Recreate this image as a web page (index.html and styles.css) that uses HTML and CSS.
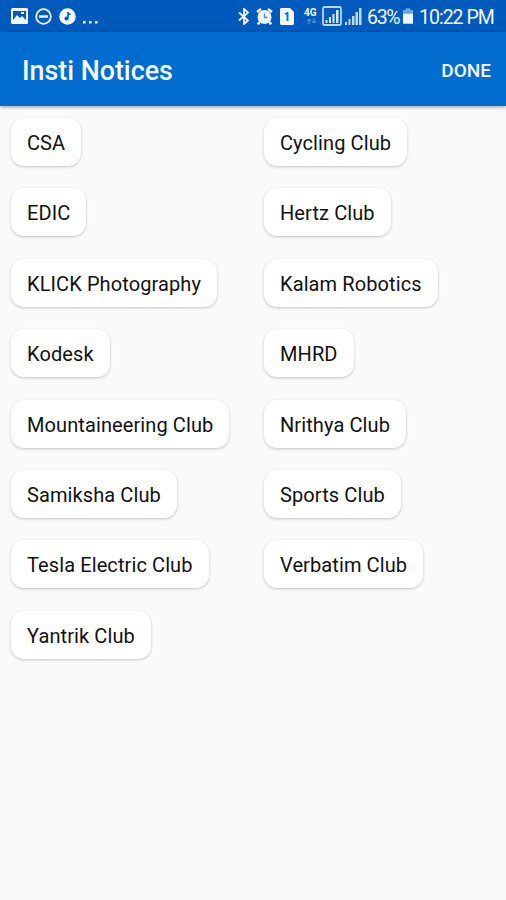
FILE: index.html
```html
<!DOCTYPE html>
<html lang="en">
<head>
<meta charset="utf-8">
<title>Insti Notices</title>
<link rel="stylesheet" href="styles.css">
</head>
<body>
<div class="status">
  <div class="status-left">
    <svg width="17" height="16" viewBox="0 0 17 16"><path fill="currentColor" fill-rule="evenodd" d="M1.500 0h14a1.500 1.500 0 0 1 1.500 1.500v13a1.500 1.500 0 0 1-1.500 1.500h-14A1.500 1.500 0 0 1 0 14.500v-13A1.500 1.500 0 0 1 1.500 0zM2 3v9l4-5 3 3 2-2 4 4V3zM10 4h3v2h-3z"/></svg>
    <svg width="17" height="17" viewBox="0 0 17 17"><circle cx="8.500" cy="8.500" r="7.300" fill="none" stroke="currentColor" stroke-width="1.800"/><path d="M4 8.500h9" stroke="currentColor" stroke-width="2.500"/></svg>
    <svg width="17" height="17" viewBox="0 0 17 17"><circle cx="8.500" cy="8.500" r="8.300" fill="currentColor"/><path d="M9 4v6M9 5.500l2.500 1" stroke="#005abc" stroke-width="1.500"/><circle cx="7.500" cy="10.500" r="2" fill="#005abc"/></svg>
    <svg class="more" width="15" height="3" viewBox="0 0 15 3"><path fill="currentColor" d="M0 0h2.500v2.500H0zM6 0h2.500v2.500H6zM12 0h2.500v2.500H12z"/></svg>
  </div>
  <div class="status-right">
    <svg class="bt" width="12" height="17" viewBox="0 0 12 17"><path d="M1 4.500l9 8-4 3.500V1l4 3.500-9 8" fill="none" stroke="currentColor" stroke-width="1.800"/></svg>
    <svg class="alarm" width="17" height="17" viewBox="0 0 17 17"><circle cx="8.500" cy="9" r="7" fill="currentColor"/><path d="M1 4l4-3M16 4l-4-3M3.500 14L2 16.500M13.500 14l1.500 2.500" stroke="currentColor" stroke-width="2.500"/><path d="M8.500 5.500V9.500H11.500" fill="none" stroke="#4d88cd" stroke-width="1.300"/></svg>
    <svg class="sim" width="14" height="17" viewBox="0 0 14 17"><path fill="currentColor" d="M1 0h9l4 4v12l-1 1H1l-1-1V1z"/><path d="M5 6l2.500-1v8" fill="none" stroke="#1765bf" stroke-width="1.800"/></svg>
    <div class="network"><span>4G</span><svg width="11" height="6" viewBox="0 0 11 6"><path d="M3 6V1M1 3l2-2 2 2M8 0v5M6 3l2 2 2-2" fill="none" stroke="#5c9be0" stroke-width="1"/></svg></div>
    <svg class="boxed" width="20" height="20" viewBox="0 0 20 20"><rect x="1" y="1" width="18" height="18" rx="1.500" fill="none" stroke="#b7d4f5" stroke-width="1.800"/><path fill="#d7e7fb" d="M3.500 14h2v3h-2zM7 11h2v6H7zM10.500 8h2v9h-2zM14 4h2.500v13H14z"/></svg>
    <svg class="signal" width="17" height="17" viewBox="0 0 17 17"><path fill="#c2d9f5" d="M0 14h2v3H0zM3.500 11h2v6h-2zM7 8h2.500v9H7zM10.500 4H13v13h-2.500zM14 0h2.500v17H14z"/></svg>
    <span class="percent">63%</span>
    <svg class="battery" width="10" height="16" viewBox="0 0 11 17"><path fill="#6ba6e2" d="M3 0h5v2h3v5H0V2h3z"/><path fill="currentColor" d="M0 6h11v11H0z"/></svg>
    <span class="clock">10:22 PM</span>
  </div>
</div>
<header class="appbar"><h1>Insti Notices</h1><button class="done">DONE</button></header>
<main class="grid">
  <div class="chip">CSA</div><div class="chip">Cycling Club</div>
  <div class="chip">EDIC</div><div class="chip">Hertz Club</div>
  <div class="chip">KLICK Photography</div><div class="chip">Kalam Robotics</div>
  <div class="chip">Kodesk</div><div class="chip">MHRD</div>
  <div class="chip">Mountaineering Club</div><div class="chip">Nrithya Club</div>
  <div class="chip">Samiksha Club</div><div class="chip">Sports Club</div>
  <div class="chip">Tesla Electric Club</div><div class="chip">Verbatim Club</div>
  <div class="chip">Yantrik Club</div>
</main>
</body>
</html>
```
FILE: styles.css
```css
* { box-sizing: border-box; }
body {
  margin: 0;
  height: 900px;
  overflow: hidden;
  background: #fafafa;
  font-family: Roboto, "Liberation Sans", sans-serif;
}
svg { display: block; flex: none; }
.status {
  display: flex;
  justify-content: space-between;
  height: 32px;
  padding: 0 11px;
  background: #005abc;
  color: #f1f7ff;
}
.status-left { display: flex; align-items: center; gap: 7px; }
.more { margin-top: 12px; }
.status-right { display: flex; align-items: center; white-space: nowrap; }
.alarm { margin-left: 6px; }
.sim { margin-left: 7px; }
.network { width: 14px; margin-left: 10px; font-size: 10px; font-weight: 700; line-height: 10px; }
.network svg { margin-left: 2px; }
.boxed { margin-left: 4px; }
.signal { margin-left: 3px; }
.percent { width: 32px; margin-left: 5px; font-size: 19.5px; letter-spacing: -1.3px; padding-top: 2px; }
.battery { margin-left: 4px; }
.clock { width: 76px; margin-left: 6px; font-size: 19.5px; letter-spacing: -1px; padding-top: 2px; }
.appbar {
  display: flex;
  align-items: center;
  justify-content: space-between;
  height: 74px;
  padding: 4px 15px 0 22px;
  background: #006ccf;
  color: #f5f9ff;
  box-shadow: 0 1px 4px rgba(0, 0, 0, .4);
}
.appbar h1 { margin: 0; font-size: 26.8px; font-weight: 500; }
.done {
  margin-top: -2px;
  padding: 0;
  border: 0;
  background: none;
  color: inherit;
  font: 500 19px Roboto, sans-serif;
}
.grid {
  display: grid;
  grid-template-columns: 1fr 1fr;
  grid-auto-rows: 70.4px;
  padding: 12px 0 0 11px;
  column-gap: 11px;
  justify-items: start;
}
.chip {
  height: 48px;
  padding: 0 16px;
  border-radius: 13px;
  background: #fff;
  box-shadow: 0 1px 3px rgba(0, 0, 0, .22);
  color: #111;
  font-size: 20px;
  line-height: 51px;
  letter-spacing: .1px;
  white-space: nowrap;
}
```
